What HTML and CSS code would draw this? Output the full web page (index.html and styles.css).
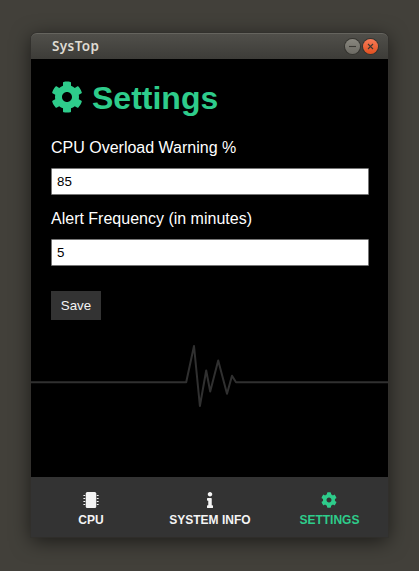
FILE: index.html
```html
<!DOCTYPE html>
<html lang="en">
<head>
<meta charset="utf-8">
<title>SysTop</title>
<link rel="stylesheet" href="styles.css">
</head>
<body>
<svg class="defs" width="0" height="0">
  <symbol id="cog" viewBox="0 0 512 512"><path d="M487.4 315.7l-42.6-24.6c4.3-23.2 4.3-47 0-70.2l42.6-24.6c4.9-2.8 7.1-8.6 5.5-14-11.1-35.6-30-67.8-54.7-94.6-3.8-4.1-10-5.1-14.8-2.3L380.8 110c-17.9-15.4-38.5-27.3-60.8-35.1V25.8c0-5.6-3.9-10.5-9.4-11.7-36.7-8.2-74.3-7.8-109.2 0-5.5 1.2-9.4 6.1-9.4 11.7V75c-22.2 7.9-42.8 19.8-60.8 35.1L88.7 85.5c-4.9-2.8-11-1.9-14.8 2.3-24.7 26.7-43.6 58.9-54.7 94.6-1.7 5.4.6 11.2 5.5 14L67.3 221c-4.3 23.2-4.3 47 0 70.2l-42.6 24.6c-4.9 2.8-7.1 8.6-5.5 14 11.1 35.6 30 67.8 54.7 94.6 3.8 4.1 10 5.1 14.8 2.3l42.6-24.6c17.9 15.4 38.5 27.3 60.8 35.1v49.2c0 5.6 3.9 10.5 9.4 11.7 36.7 8.2 74.3 7.8 109.2 0 5.5-1.2 9.4-6.1 9.4-11.7v-49.2c22.2-7.9 42.8-19.8 60.8-35.1l42.6 24.6c4.9 2.8 11 1.9 14.8-2.3 24.7-26.7 43.6-58.9 54.7-94.6 1.5-5.5-.7-11.3-5.6-14.1zM256 336c-44.1 0-80-35.9-80-80s35.9-80 80-80 80 35.9 80 80-35.9 80-80 80z"/></symbol>
</svg>
<div class="window">
  <header class="titlebar">
    <span class="title">SysTop</span>
    <span class="control minimize"><svg viewBox="0 0 15 15"><path d="M4 7.5h7"/></svg></span>
    <span class="control close"><svg viewBox="0 0 15 15"><path d="M5 5l5 5M10 5l-5 5"/></svg></span>
  </header>
  <main class="content">
    <h1><svg class="heading-icon"><use href="#cog"/></svg>Settings</h1>
    <form>
      <label for="overload">CPU Overload Warning %</label>
      <input id="overload" type="text" value="85">
      <label for="frequency">Alert Frequency (in minutes)</label>
      <input id="frequency" type="text" value="5">
      <button type="button">Save</button>
    </form>
    <svg class="pulse" viewBox="0 0 357 70"><path d="M0 42.300h155.200l7.800-36.300 5.900 60 6.300-35.500 4 21 8-31 8.800 33.300 5-18 4 6.500h152.500"/></svg>
  </main>
  <nav class="tabs">
    <a class="tab">
      <svg class="tab-icon" viewBox="0 0 512 512"><rect x="88" width="336" height="512" rx="48"/><g id="pins"><path id="pin" d="M512 106v8a6 6 0 0 1-6 6h-18v2a6 6 0 0 1-6 6h-42V92h42a6 6 0 0 1 6 6v2h18a6 6 0 0 1 6 6z"/><use href="#pin" y="96"/><use href="#pin" y="192"/><use href="#pin" y="288"/></g><use href="#pins" transform="matrix(-1 0 0 1 512 0)"/></svg>
      CPU
    </a>
    <a class="tab">
      <svg class="tab-icon" viewBox="-160 0 512 512"><path d="M20 424.229h20V279.771H20c-11.046 0-20-8.954-20-20V212c0-11.046 8.954-20 20-20h112c11.046 0 20 8.954 20 20v212.229h20c11.046 0 20 8.954 20 20V492c0 11.046-8.954 20-20 20H20c-11.046 0-20-8.954-20-20v-47.771c0-11.046 8.954-20 20-20zM96 0C56.235 0 24 32.235 24 72s32.235 72 72 72 72-32.235 72-72S135.764 0 96 0z"/></svg>
      SYSTEM INFO
    </a>
    <a class="tab active">
      <svg class="tab-icon"><use href="#cog"/></svg>
      SETTINGS
    </a>
  </nav>
</div>
</body>
</html>
```
FILE: styles.css
```css
* { box-sizing: border-box; }
body {
  margin: 0;
  height: 571px;
  padding: 33px 31px 34px;
  overflow: hidden;
  background: #42403a;
  font-family: "Liberation Sans", Arial, sans-serif;
}
svg { display: block; fill: currentColor; }
.defs { position: absolute; }
.window {
  width: 357px;
  height: 504px;
  display: flex;
  flex-direction: column;
  border-radius: 6px 6px 0 0;
  box-shadow: 0 0 0 1px rgba(50, 49, 45, .7), 0 4px 20px rgba(0, 0, 0, .6);
}
.titlebar {
  height: 26px;
  display: flex;
  align-items: center;
  gap: 3px;
  padding: 0 10px 0 21px;
  border-radius: 6px 6px 0 0;
  border-top: 1px solid #65645e;
  background: linear-gradient(#504f4a, #3d3c38);
}
.title {
  flex: 1;
  padding-bottom: 2px;
  color: #dfdbd2;
  font: 600 13.5px/20px "Noto Sans", sans-serif;
  letter-spacing: .4px;
}
.control {
  width: 15px;
  height: 15px;
  border-radius: 50%;
  box-shadow: 0 0 0 1px #35342f;
}
.control svg { fill: none; stroke: #3b3934; stroke-width: 1.1; }
.minimize { background: linear-gradient(#89877f, #6c6a63); }
.close { background: linear-gradient(#f77b58, #e2501f); }
.content {
  height: 418px;
  padding: 21px 0 0;
  background: #000;
  color: #fff;
}
h1 {
  display: flex;
  align-items: center;
  gap: 9px;
  height: 37px;
  margin: 0 20px 21px;
  color: #2ecc8b;
  font-size: 32px;
  line-height: 37px;
}
.heading-icon { width: 32px; height: 32px; margin-top: -4px; }
form { padding: 0 20px; }
label {
  display: block;
  height: 30px;
  font-size: 16px;
  line-height: 20px;
}
input {
  display: block;
  width: 318px;
  height: 27px;
  margin: 0 0 14px;
  padding: 5px;
  border: 1px solid #767676;
  border-radius: 1px;
  background: #fff;
  color: #000;
  font: 13.333px "Liberation Sans", Arial, sans-serif;
}
button {
  display: block;
  width: 50px;
  height: 29px;
  margin-top: 25px;
  padding: 0;
  border: 0;
  background: #333;
  color: #f4f4f4;
  font: 13.333px "Liberation Sans", Arial, sans-serif;
}
.pulse {
  width: 357px;
  height: 70px;
  margin-top: 20px;
  fill: none;
  stroke: #303030;
  stroke-width: 2;
  stroke-linejoin: round;
}
.tabs {
  height: 60px;
  display: grid;
  grid-template-columns: 119px 119px 120px;
  padding-left: .4px;
  background: #333;
}
.tab {
  display: flex;
  flex-direction: column;
  align-items: center;
  gap: 5px;
  padding-top: 15px;
  color: #f4f4f4;
  font-size: 12px;
  font-weight: 700;
  line-height: 14px;
}
.tab-icon { width: 16px; height: 16px; }
.active { color: #2ecc8b; }
```
